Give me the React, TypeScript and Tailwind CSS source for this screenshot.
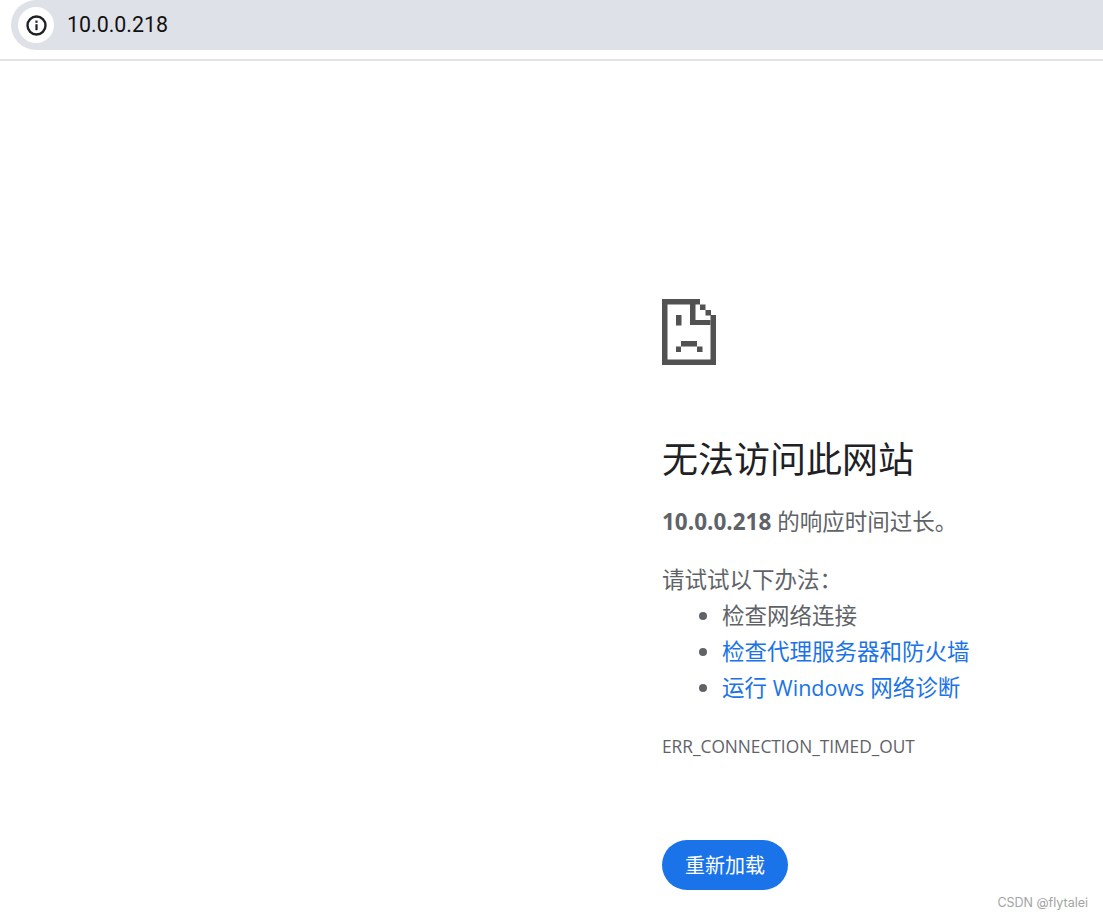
const cjk = "font-['Open_Sans','Noto_Sans_CJK_SC',sans-serif]";

function SadFile() {
  return (
    <svg width="54" height="66" viewBox="0 0 54 66" fill="#525252">
      <rect x="0" y="0" width="38" height="5.5" />
      <rect x="0" y="0" width="5.5" height="66" />
      <rect x="0" y="60.5" width="54" height="5.5" />
      <rect x="48.5" y="16" width="5.5" height="50" />
      <rect x="28" y="0" width="5.5" height="26" />
      <rect x="28" y="21" width="20.5" height="5" />
      <rect x="38" y="5.5" width="5.5" height="5.5" />
      <rect x="43.5" y="11" width="5.5" height="5.5" />
      <rect x="14" y="16" width="5.5" height="10.5" />
      <rect x="19" y="42" width="16" height="5.5" />
      <rect x="14" y="47.5" width="5" height="5.5" />
      <rect x="35" y="47.5" width="5.5" height="5.5" />
    </svg>
  );
}

function InfoIcon() {
  return (
    <svg width="21" height="21" viewBox="0 0 21 21" fill="none">
      <circle cx="10.5" cy="10.5" r="9" stroke="#202124" strokeWidth="2.4" />
      <rect x="9.4" y="9.2" width="2.2" height="6" fill="#202124" />
      <rect x="9.4" y="5.6" width="2.2" height="2.2" fill="#202124" />
    </svg>
  );
}

export default function App() {
  return (
    <div className={`relative h-[919px] w-[1103px] overflow-hidden bg-white ${cjk}`}>
      <header className="h-[61px] border-b-2 border-[#e3e3e3] pl-[11px]">
        <div className="flex h-[50px] items-center rounded-l-[25px] bg-[#dfe1e9] pl-[7px]">
          <div className="flex h-9 w-9 items-center justify-center rounded-full bg-white">
            <InfoIcon />
          </div>
          <span className="ml-[13px] font-['Roboto',sans-serif] text-[21.4px] text-[#111]">10.0.0.218</span>
        </div>
      </header>

      <main className="pl-[662px] pt-[238px] text-[22.5px] leading-9 text-[#5f6368]">
        <SadFile />
        <h1 className="mt-[68px] text-4xl leading-[54px] font-normal text-[#202124]">无法访问此网站</h1>
        <p className="mt-[17px]">
          <strong className="font-bold">10.0.0.218</strong> 的响应时间过长。
        </p>
        <p className="mt-[22px]">请试试以下办法：</p>
        <ul className="list-disc pl-[60px]">
          <li>检查网络连接</li>
          <li>
            <a className="text-[#1a73e8]">检查代理服务器和防火墙</a>
          </li>
          <li>
            <a className="text-[#1a73e8]">
              运行 <span className="text-[21.5px]">Windows</span> 网络诊断
            </a>
          </li>
        </ul>
        <p className="mt-[29px] text-[17.3px] leading-6">ERR_CONNECTION_TIMED_OUT</p>
        <button className="mt-[81px] flex h-[50px] w-[126px] items-center justify-center rounded-[25px] bg-[#1a73e8] pt-0.5 text-[20px] text-white">
          重新加载
        </button>
      </main>

      <span className="absolute top-[894px] right-[15px] font-['Inter',sans-serif] text-[12.5px] text-[#a3a3a3]">CSDN @flytalei</span>
    </div>
  );
}
